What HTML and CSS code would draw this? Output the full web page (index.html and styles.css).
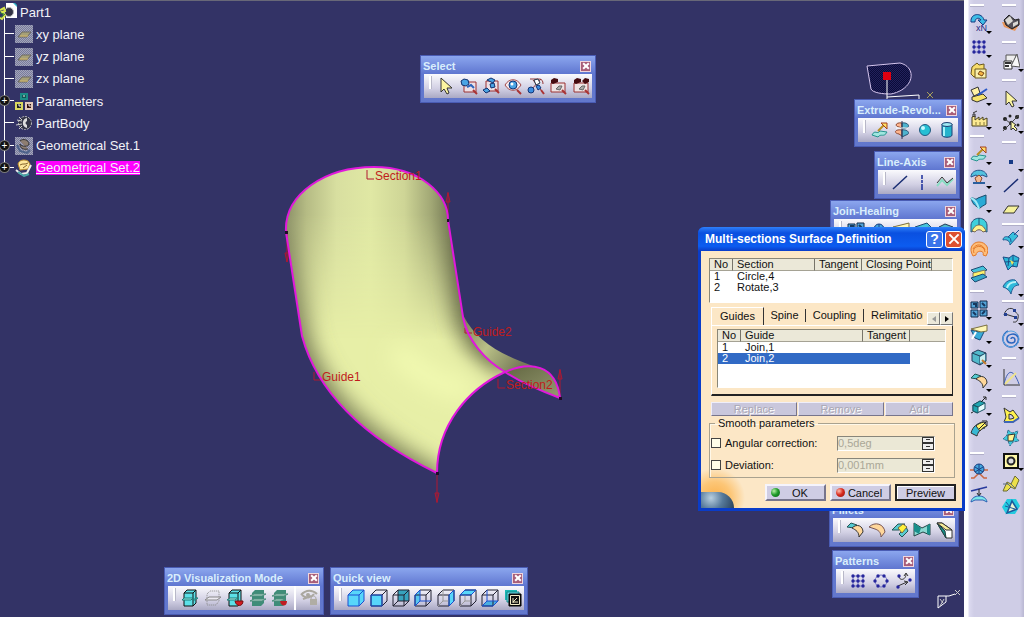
FILE: index.html
```html
<!DOCTYPE html>
<html lang="en">
<head>
    <meta charset="UTF-8">
    <meta name="viewport" content="width=device-width, initial-scale=1.0">
    <title>Part1</title>
    <link rel="stylesheet" href="styles.css">
</head>
<body>
    <!-- Icon shapes shared by the toolbars -->
    <svg class="sprites" aria-hidden="true">
        <defs>
            <pattern id="dither" width="2" height="2" patternUnits="userSpaceOnUse"><rect width="2" height="2" fill="#777b9e"/><path d="M0 0h1v1H0zM1 1h1v1H1z" fill="#a5a6b8"/></pattern>
            <pattern id="mesh" width="2" height="2" patternUnits="userSpaceOnUse"><path d="M0 0h1v1H0zM1 1h1v1H1z" fill="#0b0b38"/></pattern>
        </defs>
        <!-- tree -->
        <symbol id="t-part" viewBox="0 0 18 18"><path d="M6 0h8l3 3v12H6z" fill="#fff"/><path d="M13 0l4 4v-2l-2-2z" fill="#35b5c8"/><circle cx="9" cy="9" r="4.500" fill="#334" stroke="#bbb"/><path d="M0 7l4-2 1 3-3 1 3 3-3 4-2-1" fill="none" stroke="#d8e64c" stroke-width="2"/><path d="M0 10l4 1M1 14l4-3" stroke="#2c7a38"/></symbol>
        <symbol id="t-plane" viewBox="0 0 18 18"><rect width="18" height="18" fill="url(#dither)"/><path d="M3 12l4-5h9l-4 5z" fill="#a6a078" stroke="#6d6a63"/><path d="M5 11h8" stroke="#d3b66b"/></symbol>
        <symbol id="t-param" viewBox="0 0 18 18"><g stroke-width="2"><path d="M6 2h6v5H6z" fill="#155" stroke="#1c8c86"/><path d="M1 11h6v6H1z" fill="#222" stroke="#d9d860"/><path d="M11 11h6v6h-6z" fill="#311" stroke="#e3c9ba"/></g><path d="M3 13h2v2M13 13h2v2M8 4h2" fill="none" stroke="#eee"/></symbol>
        <symbol id="t-body" viewBox="0 0 18 18"><circle cx="10" cy="9" r="6.500" fill="#333446" stroke="#bbb" stroke-dasharray="2 1"/><path d="M12 4c-5 0-6 9 0 10v-3c-2-1-2-3 0-4z" fill="#ddd"/><path d="M2 6l5 1M1 11l6-1M4 3l3 3M4 15l3-3" stroke="#ccc"/></symbol>
        <symbol id="t-set" viewBox="0 0 18 18"><rect width="18" height="18" fill="url(#dither)"/><path d="M5 4c3-3 9-1 9 3 0 3-8 3-9 0 0 4 3 6 8 5" fill="#8d7d70" stroke="#333"/><path d="M2 8l3 6 7 2 3-3" fill="none" stroke="#4c618a" stroke-width="2"/></symbol>
        <symbol id="t-set2" viewBox="0 0 18 18"><path d="M3 5c1-4 6-5 10-3l2 3-2 5-8 1z" fill="#ffe79c" stroke="#b98c2e"/><path d="M5 6c3-2 5 0 8-2M8 9l4-3" fill="none" stroke="#82602a"/><path d="M1 11l5 4 6-1 4-8" fill="none" stroke="#eee" stroke-width="2"/><path d="M3 13l6 4 5-2" fill="none" stroke="#48a5a6" stroke-width="2"/></symbol>
        <!-- select -->
        <symbol id="i-arrow" viewBox="0 0 18 18"><path d="M4 1v14l3-3 3 5 2-1-2-5h5z" fill="#fcf5a0" stroke="#333"/></symbol>
        <symbol id="i-sel1" viewBox="0 0 18 18"><path d="M4 5h12v10H4z" fill="#ecdfe6" stroke="#9b3030"/><path d="M1 4l3-2 4 1 1 4-3 2-4-1z" fill="#4aa4e4" stroke="#13306e"/><path d="M7 10l4-2 3 3" stroke="#2c65bb" fill="none" stroke-width="2"/><path d="M13 13l4 4" stroke="#a33" stroke-width="2"/></symbol>
        <symbol id="i-sel2" viewBox="0 0 18 18"><path d="M4 4h12v10H4z" fill="#ecdfe6" stroke="#9b3030"/><path d="M5 3l4-2 4 2-2 3zM1 13l4-2 3 3-4 2zM8 7l4-1 1 4-4 1z" fill="#4aa4e4" stroke="#13306e"/><path d="M13 12l4 4" stroke="#a33" stroke-width="2"/></symbol>
        <symbol id="i-eye" viewBox="0 0 18 18"><path d="M1 8c4-7 12-7 16 0-4 7-12 7-16 0z" fill="#f4e9ed" stroke="#a34848"/><circle cx="9" cy="8" r="4" fill="#4aa4e4" stroke="#123477"/><circle cx="8" cy="7" r="1.500" fill="#fff"/><path d="M13 13l4 4" stroke="#a33" stroke-width="2"/></symbol>
        <symbol id="i-cut" viewBox="0 0 18 18"><path d="M3 2h9c3 0 4 2 4 5M6 3l8 10M14 2L4 13" stroke="#953838" fill="none"/><path d="M7 3l4-1 2 4-4 2z" fill="#fff" stroke="#234"/><circle cx="4" cy="13" r="3" fill="#3a8de0" stroke="#123477"/><path d="M9 9l3-1 2 3-3 2z" fill="#3a8de0" stroke="#123477"/><path d="M14 13l3 4" stroke="#a33" stroke-width="2"/></symbol>
        <symbol id="i-box1" viewBox="0 0 18 18"><path d="M2 6h14v9H2z" fill="#eee3e4" stroke="#9b3030"/><path d="M2 3l3-2 4 1v3l-5 2-2-1z" fill="#450b10"/><path d="M7 12l3-3h3l-2 4z" fill="#aaa" stroke="#666"/><path d="M13 13l4 4" stroke="#a33" stroke-width="2"/></symbol>
        <symbol id="i-box2" viewBox="0 0 18 18"><path d="M2 6h14v9H2z" fill="#eee3e4" stroke="#9b3030"/><path d="M2 3l3-2 4 1v3l-5 2-2-1zM10 4l3-3 4 1v3l-4 2z" fill="#450b10"/><path d="M7 12l3-3h3l-2 4z" fill="#aaa" stroke="#666"/><path d="M13 13l4 4" stroke="#a33" stroke-width="2"/></symbol>
        <!-- surfaces -->
        <symbol id="i-extrude" viewBox="0 0 18 18"><path d="M1 14c3-6 5 0 8-4l7 1c-3 6-6 1-9 5z" fill="#9fe6df" stroke="#26938f"/><path d="M7 10l6-6" stroke="#b98e20" stroke-width="2"/><path d="M10 2h6v6z" fill="#ffdf66" stroke="#a33e1c"/></symbol>
        <symbol id="i-revolve" viewBox="0 0 18 18"><path d="M9 2c-6-1-8 3-3 4l3 1zM9 9c-7-1-9 3-3 4l3 2z" fill="#ffb58e" stroke="#8a4730"/><path d="M9 2c6-1 9 4 4 5l-4 1zM9 9c6-1 9 4 4 5l-4 2z" fill="#4eb3ce" stroke="#265374"/><path d="M9 0v18" stroke="#335"/><path d="M3 7h12" stroke="#fff"/></symbol>
        <symbol id="i-sphere" viewBox="0 0 18 18"><circle cx="9" cy="9" r="5.500" fill="#26bfd4" stroke="#225a80"/><circle cx="7" cy="7" r="2" fill="#c5fbff"/></symbol>
        <symbol id="i-cyl" viewBox="0 0 18 18"><path d="M4 3v11c0 3 10 3 10 0V3z" fill="#24b3cc" stroke="#1c3f74"/><path d="M6 6v9" stroke="#a6f3fa" stroke-width="2"/><ellipse cx="9" cy="3.500" rx="5" ry="2" fill="#9fe9f2" stroke="#1c3f74"/></symbol>
        <symbol id="i-line" viewBox="0 0 18 18"><path d="M2 16L16 3" stroke="#182c72" stroke-width="1.500"/></symbol>
        <symbol id="i-axis" viewBox="0 0 18 18"><path d="M9 2v4m0 1v3m0 1v6" stroke="#182c9a" stroke-width="1.500"/></symbol>
        <symbol id="i-poly" viewBox="0 0 18 18"><path d="M1 13l5-6 5 5 6-6" fill="none" stroke="#8adcc4" stroke-width="2"/><path d="M1 10l5-6 5 6 6-5" fill="none" stroke="#333"/></symbol>
        <!-- fillets -->
        <symbol id="i-fil1" viewBox="0 0 18 18"><path d="M1 6l4-4 6 2-3 3z" fill="#54cbd2" stroke="#255"/><path d="M6 7c5-5 11-2 11 4l-4 5c0-5-3-7-7-9z" fill="#ffd79a" stroke="#333"/></symbol>
        <symbol id="i-fil2" viewBox="0 0 18 18"><path d="M1 6c6-6 15-3 16 5l-4 5c0-5-3-7-6-8-2-1-4-1-6-2z" fill="#ffd79a" stroke="#755"/></symbol>
        <symbol id="i-fil3" viewBox="0 0 18 18"><path d="M1 9l6-6h7l-6 6zM8 13l7-7 2 4-6 6z" fill="#58cbd0" stroke="#255"/><path d="M7 7l5-4 4 3-5 6z" fill="#fff23c" stroke="#764"/></symbol>
        <symbol id="i-fil4" viewBox="0 0 18 18"><path d="M1 2l8 5 8-4v11l-7-3-9 4z" fill="#8bd9d2" stroke="#244"/><path d="M1 2v8l5 3 2-6zM17 3l-3 2v8l3 1z" fill="#198f8b"/></symbol>
        <symbol id="i-fil5" viewBox="0 0 18 18"><path d="M2 2h5l10 7v8h-6z" fill="#fff" stroke="#333"/><path d="M2 2l9 15-1-7z" fill="#178f88" stroke="#244"/><path d="M2 2h5l10 7h-6z" fill="#f6ec98" stroke="#333"/></symbol>
        <!-- patterns -->
        <symbol id="i-grid" viewBox="0 0 18 18"><path d="M3 4h12M3 9h12M3 14h12M4 3v12M9 3v12M14 3v12" stroke="#7a7ac8"/><g fill="#26269c"><circle cx="4" cy="4" r="1.700"/><circle cx="9" cy="4" r="1.700"/><circle cx="14" cy="4" r="1.700"/><circle cx="4" cy="9" r="1.700"/><circle cx="9" cy="9" r="1.700"/><circle cx="14" cy="9" r="1.700"/><circle cx="4" cy="14" r="1.700"/><circle cx="9" cy="14" r="1.700"/><circle cx="14" cy="14" r="1.700"/></g></symbol>
        <symbol id="i-ring" viewBox="0 0 18 18"><circle cx="9" cy="9" r="6" fill="none" stroke="#7a7ac8"/><g fill="#26269c"><circle cx="6" cy="4" r="1.700"/><circle cx="12" cy="4" r="1.700"/><circle cx="3" cy="9" r="1.700"/><circle cx="15" cy="9" r="1.700"/><circle cx="6" cy="14" r="1.700"/><circle cx="12" cy="14" r="1.700"/></g></symbol>
        <symbol id="i-upat" viewBox="0 0 18 18"><path d="M4 5c1 4 7 3 7-3M9 4l2-3 2 3M3 14l9-4M9 9l4 1-3 3" fill="none" stroke="#333"/><g fill="#26269c"><circle cx="4" cy="4" r="1.700"/><circle cx="3" cy="15" r="1.700"/><circle cx="15" cy="8" r="1.700"/></g></symbol>
        <!-- visualization -->
        <symbol id="i-v1" viewBox="0 0 18 18"><path d="M3 4l3-3h9v13l-3 3H3z" fill="#5ce0e8" stroke="#111"/><path d="M3 4h9v13M12 4l3-3" fill="none" stroke="#111"/><path d="M1 11l2-2h9l-2 2zM12 11l3-2h2l-3 2z" fill="#98ecea" stroke="#187e78"/></symbol>
        <symbol id="i-v2" viewBox="0 0 18 18"><path d="M3 5l3-3h9v10l-3 4H3z" fill="none" stroke="#888" stroke-dasharray="1 1"/><path d="M1 11l4-3h12l-4 3z" fill="#eceaf2" stroke="#888"/></symbol>
        <symbol id="i-v3" viewBox="0 0 18 18"><path d="M3 4l3-3h9v13l-3 3H3z" fill="#5ce0e8" stroke="#111"/><path d="M3 4h9v9M12 4l3-3" fill="none" stroke="#111"/><path d="M1 11l3-2h8l-3 2z" fill="#c0f4f2" stroke="#187e78"/><path d="M9 12h8c0 6-7 6-8 0z" fill="#d01c22" stroke="#711"/></symbol>
        <symbol id="i-v4" viewBox="0 0 18 18"><path d="M3 4l3-3h9v13l-3 3H3z" fill="#3f8c78"/><path d="M1 7l4-2h12l-4 2zM1 12l4-2h12l-4 2z" fill="#b4d6cc" stroke="#4c8c7b"/></symbol>
        <symbol id="i-v5" viewBox="0 0 18 18"><path d="M3 4l3-3h9v13l-3 3H3z" fill="#3f8c78"/><path d="M1 7l4-2h12l-4 2zM1 12l4-2h9l-4 2z" fill="#b4d6cc" stroke="#4c8c7b"/><path d="M9 12h7c0 6-6 6-7 0z" fill="#c01c22"/></symbol>
        <symbol id="i-v6" viewBox="0 0 18 18"><path d="M1 6c5-6 12-5 16-1M2 6c4 4 9 3 12-1M3 10l8-3" fill="none" stroke="#aaa79f" stroke-width="2"/><circle cx="8" cy="6" r="2" fill="#aaa79f"/><path d="M10 10h7v6h-7z" fill="#b0ada4"/><path d="M11 10c0-4 5-4 5 0" fill="none" stroke="#aaa79f"/></symbol>
        <!-- cube views -->
        <symbol id="cube" viewBox="0 0 18 18"><path d="M1 6h11v11H1zM6 1h11v11l-5 5M1 6l5-5M12 6l5-5" fill="none" stroke="#223"/></symbol>
        <symbol id="i-q1" viewBox="0 0 18 18"><path d="M1 6l5-5h11v11l-5 5H1z" fill="#58d6fa" stroke="#1a4ed0"/><path d="M1 6h11v11M12 6l5-5" fill="none" stroke="#1a4ed0"/></symbol>
        <symbol id="i-q2" viewBox="0 0 18 18"><path d="M1 6h11v11H1z" fill="#58d6fa"/><use href="#cube"/><path d="M1 6h11v11H1z" fill="none" stroke="#1a4ed0"/></symbol>
        <symbol id="i-q3" viewBox="0 0 18 18"><path d="M6 1h11v11H6z" fill="#37a4bd"/><use href="#cube"/><path d="M6 1v11h11M1 17l5-5" fill="none" stroke="#223"/></symbol>
        <symbol id="i-q4" viewBox="0 0 18 18"><path d="M1 6l5-5v11l-5 5z" fill="#58c6ee"/><use href="#cube"/><path d="M6 12h11M1 6l5-5v11l-5 5z" fill="none" stroke="#1a4ed0"/></symbol>
        <symbol id="i-q5" viewBox="0 0 18 18"><path d="M12 6l5-5v11l-5 5z" fill="#58d6fa"/><use href="#cube"/><path d="M6 1v11h6M1 17l5-5" fill="none" stroke="#999"/><path d="M12 6l5-5v11l-5 5z" fill="none" stroke="#1a4ed0"/></symbol>
        <symbol id="i-q6" viewBox="0 0 18 18"><path d="M1 6l5-5h11l-5 5z" fill="#58d6fa"/><use href="#cube"/><path d="M6 6v6h6M1 17l5-5" fill="none" stroke="#999"/><path d="M1 6l5-5h11l-5 5z" fill="none" stroke="#1a4ed0"/></symbol>
        <symbol id="i-q7" viewBox="0 0 18 18"><path d="M1 17l5-5h11l-5 5z" fill="#49aee0"/><use href="#cube"/><path d="M6 1v11M1 17l5-5h11l-5 5z" fill="none" stroke="#1a4ed0"/></symbol>
        <symbol id="i-q8" viewBox="0 0 18 18"><path d="M1 1h12v10H1z" fill="#1bb6b4"/><path d="M3 3h12v10H3z" fill="#7de" stroke="#188"/><path d="M5 5h12v12H5z" fill="#111" stroke="#000"/><path d="M6.500 6.500h9v9h-9zM9 14v-5M9 13h5M9 13l4-4" fill="none" stroke="#f3edc9"/></symbol>
        <!-- dock -->
        <symbol id="d-update" viewBox="0 0 18 18"><path d="M1 8c-1-9 11-10 13-2h3l-4 5-5-5h3c-2-3-6-2-6 2z" fill="#3ebde6" stroke="#173a80"/></symbol>
        <symbol id="d-catalog" viewBox="0 0 18 18"><path d="M2 5l5-4 2 2 5-1v9l-10 4-3-3z" fill="#f7dc6c" stroke="#6b581f"/><path d="M5 7h11v9H5z" fill="#f9efab" stroke="#6b581f"/><path d="M8 12l2-3 4 2-2 3z" fill="#f7b442" stroke="#7a4a15"/></symbol>
        <symbol id="d-sketch" viewBox="0 0 18 18"><path d="M1 4l7-3 2 6-6 3z" fill="#fff2a4" stroke="#333"/><path d="M2 11l11-3 4 4-10 4-5-2z" fill="#f7e46c" stroke="#333"/><path d="M8 9l9-6" stroke="#2a58c8" stroke-width="2"/></symbol>
        <symbol id="d-factory" viewBox="0 0 18 18"><path d="M2 16V7l3-1v4l4-3v3l4-3v3l4-2v8z" fill="#fbe991" stroke="#4b431c"/><path d="M3 7V4h2v3M3 3l4-2" fill="none" stroke="#333"/><path d="M6 12v3M10 12v3M14 12v3" stroke="#86793c"/></symbol>
        <symbol id="d-umbrella" viewBox="0 0 18 18"><path d="M1 8c0-9 16-9 16 0l-5-2-3 2-3-2z" fill="#52c1de" stroke="#24548a"/><path d="M5 9l4-3 3 3-2 5H7z" fill="#f3bb91" stroke="#8a482b"/><path d="M3 14h12" stroke="#2a5f9e" stroke-width="2"/></symbol>
        <symbol id="d-sheet" viewBox="0 0 18 18"><path d="M1 5c3-1 4 3 7 0l8-3v9c-3 2-4 2-7 5-3-4-6-3-8-11z" fill="#29aad6" stroke="#1b4b6b"/><path d="M1 5c4 2 6 4 8 11" fill="none" stroke="#9fe9f5" stroke-width="2"/></symbol>
        <symbol id="d-dome" viewBox="0 0 18 18"><path d="M1 15V8c1-9 15-9 16 0v7l-3-1c-2-3-8-3-10 0z" fill="#3fd0dc" stroke="#24547a"/><path d="M2 14c2-5 5-6 7-6s5 1 7 6l-3 1c-2-3-6-3-8 0z" fill="#fff28c" stroke="#765"/><path d="M9 1v7" stroke="#24547a"/></symbol>
        <symbol id="d-shell" viewBox="0 0 18 18"><path d="M3 15c-5-8 0-14 6-14s12 6 7 14l-3-1c2-5-7-5-7 0z" fill="#ffbd78" stroke="#e27a2b"/><path d="M4 12c-3-7 10-10 11-1M3 8c3-6 10-5 12 1" fill="none" stroke="#e27a2b"/></symbol>
        <symbol id="d-blend" viewBox="0 0 18 18"><path d="M1 5l12-4 4 4-12 4z" fill="#44c3db" stroke="#1d4b73"/><path d="M3 8l12-3v5l-12 3z" fill="#fff26a" stroke="#776"/><path d="M1 13l12-4 4 3-12 5z" fill="#36a9ca" stroke="#1d4b73"/></symbol>
        <symbol id="d-join" viewBox="0 0 18 18"><g fill="#53a4d8" stroke="#112a4a"><path d="M1 2h7v6H1zM10 1h7v7h-7zM1 10h7v7H1zM10 10h7v6h-7z"/></g><path d="M3 4h3v3M12 3l3 3M3 12l3 3M12 14l3-3" stroke="#17395f" fill="none" stroke-width="2"/></symbol>
        <symbol id="d-trim" viewBox="0 0 18 18"><path d="M1 6l8 2 7-4-6 12-5-2z" fill="#39abd8" stroke="#1b4b7b"/><path d="M1 5l16-4v6l-6 1z" fill="#fff7b5" stroke="#7b7040"/><path d="M2 15l4-7" stroke="#fff" stroke-width="2"/></symbol>
        <symbol id="d-cube" viewBox="0 0 18 18"><path d="M2 5l6-3 8 3v8l-6 4-8-4z" fill="#52b9cb" stroke="#223c5a"/><path d="M2 5l8 3 6-3M10 8v9" fill="none" stroke="#223c5a"/><path d="M10 9l5-3v6l-5 3z" fill="#c9edf0"/><path d="M12 12l4 4" stroke="#c07a2c" stroke-width="2"/></symbol>
        <symbol id="d-move" viewBox="0 0 18 18"><path d="M3 9l7-4 5 2v6l-8 4-4-2z" fill="#e4fbfc" stroke="#1d5566"/><path d="M3 9l5 2v6l-5-2zM3 9l7-4 5 2-7 4z" fill="#1fa6b1" stroke="#1d5566"/><path d="M11 6l5-5M13 1h3v3M3 16l-2 1" fill="none" stroke="#222"/></symbol>
        <symbol id="d-extrap" viewBox="0 0 18 18"><path d="M1 13c2-7 6-9 11-11l3 6c-5 1-7 4-8 8z" fill="#38b9d5" stroke="#333"/><path d="M6 6c2-2 4-3 8-4l3 4c-3 1-5 2-7 5z" fill="#fff168" stroke="#333"/><path d="M9 9l7-7M12 1h5v5" fill="none" stroke="#222"/></symbol>
        <symbol id="d-knot" viewBox="0 0 18 18"><path d="M0 8h4l4 4-4 4H1M18 8h-4l-4 4 4 4h3" fill="none" stroke="#cb6841" stroke-width="1.500"/><circle cx="9" cy="7" r="5" fill="#45a6dd" stroke="#1b3f83"/><path d="M9 2v10M5 5l8 5M13 5l-8 5" stroke="#1b3f83"/></symbol>
        <symbol id="d-drop" viewBox="0 0 18 18"><path d="M1 5l16-4" stroke="#27399d" stroke-width="1.500"/><path d="M9 3v7M7 7l2 3 2-3" fill="none" stroke="#222"/><path d="M1 16c1-8 15-8 16 0l-4-2H5z" fill="#7be7ea" stroke="#2b5db2"/></symbol>
        <symbol id="d-book" viewBox="0 0 18 18"><path d="M0 8l18 1-5 8-11-4z" fill="#e8975c"/><path d="M2 6l5-5 6 5 4-1v6l-7 4-6-4z" fill="#55525a" stroke="#222"/><path d="M3 6l5-4 3 5-5 4zM11 9l5-2v3l-5 3z" fill="#dad9d4"/></symbol>
        <symbol id="d-draft" viewBox="0 0 18 18"><path d="M4 3h10v9H4z" fill="#eee" stroke="#555"/><path d="M2 9h8v8H2z" fill="#fff" stroke="#333"/><path d="M3 11h6M3 14h4" stroke="#333" stroke-width="2"/><path d="M9 14l6-12 3 13z" fill="#f8f8f8" stroke="#555"/></symbol>
        <symbol id="d-pick" viewBox="0 0 18 18"><g fill="#222"><circle cx="3" cy="5" r="2"/><circle cx="8" cy="2" r="1.500"/><circle cx="15" cy="3" r="2"/><circle cx="3" cy="14" r="2"/><circle cx="16" cy="11" r="1.500"/><circle cx="9" cy="9" r="2"/></g><path d="M1 17L17 1M3 5l11 9" stroke="#444"/><path d="M9 7v9l2-2 3 3 1-2-3-3 2-1z" fill="#fbf7a8" stroke="#333"/></symbol>
        <symbol id="d-point" viewBox="0 0 18 18"><path d="M7 8h4v4H7z" fill="#163b86"/></symbol>
        <symbol id="d-plane" viewBox="0 0 18 18"><path d="M1 13l5-7h11l-5 7z" fill="#f5f19b" stroke="#333"/></symbol>
        <symbol id="d-sweep" viewBox="0 0 18 18"><path d="M1 11c0-3 3-4 5-3l5-5 5 4-8 9c0-4-3-6-7-5z" fill="#38c0dd" stroke="#245b93"/><path d="M6 8c2 0 3 2 3 5M12 6l5-5" fill="none" stroke="#214d92"/></symbol>
        <symbol id="d-net" viewBox="0 0 18 18"><path d="M1 4l6 1 4-3 6 3-2 9-5-1-4 4-2-5z" fill="#2cb8d8" stroke="#1c4c85"/><path d="M7 5l-1 8M11 2v12M3 9l13-1" stroke="#1c4c85" fill="none"/><path d="M8 7l4 2-2 3z" fill="#eee45c"/></symbol>
        <symbol id="d-loft" viewBox="0 0 18 18"><path d="M1 10c2-6 8-8 12-7l4 5c-5 0-7 4-8 9-1-3-4-6-8-7z" fill="#2fbadb" stroke="#245b93"/><path d="M5 11c1-4 4-6 9-6" fill="none" stroke="#b8f2f8" stroke-width="2"/></symbol>
        <symbol id="d-arc" viewBox="0 0 18 18"><path d="M2 9C4 1 11 1 13 5s4 2 3 7-3 4-5 4M3 8l10 3" fill="none" stroke="#333"/><path d="M2 7h3v3H2zM11 3h3v3h-3zM12 10h3v3h-3z" fill="#223e91"/></symbol>
        <symbol id="d-spiral" viewBox="0 0 18 18"><path d="M9 9c0-2 4-2 4 1 0 4-7 4-8 0-1-6 8-8 11-3 2 7-5 12-11 9-6-4-5-12 1-15" fill="none" stroke="#2865bf" stroke-width="1.500"/><circle cx="9" cy="9" r="8" fill="none" stroke="#58a1df"/></symbol>
        <symbol id="d-law" viewBox="0 0 18 18"><path d="M2 1v16h16" fill="none" stroke="#333"/><path d="M2 16C6-1 12 2 17 16" fill="none" stroke="#3e5fb4"/><path d="M3 16l11-11" stroke="#eee28d" stroke-width="2"/></symbol>
        <symbol id="d-bound" viewBox="0 0 18 18"><path d="M2 2l6 4 3-2 6 8-6 4H2l2-5z" fill="#fff24e" stroke="#333"/><path d="M7 8l3 1 2 3-3 1H7z" fill="#cfcde6" stroke="#333"/><path d="M2 16h9l6-4" fill="none" stroke="#4066b4" stroke-width="2"/></symbol>
        <symbol id="d-cross" viewBox="0 0 18 18"><path d="M6 1l4 3 6-2-2 6 3 4-6 1-3 4-2-5-5-2 4-4z" fill="#3dcbdc" stroke="#397195" stroke-dasharray="3 1"/><path d="M6 6l7-1-2 7H6z" fill="#fff393" stroke="#333"/></symbol>
        <symbol id="d-hole" viewBox="0 0 18 18"><path d="M2 2h14v14H2z" fill="#fff8a8" stroke="#111" stroke-width="2"/><circle cx="9" cy="9" r="3.500" fill="#ddd" stroke="#222" stroke-width="2"/></symbol>
        <symbol id="d-fold" viewBox="0 0 18 18"><path d="M1 16l4-9 4 2 4-8 4 4-4 9-4-2-4 4z" fill="#ece04a" stroke="#6b6b34"/><path d="M5 8l4 4M9 9l4 4M1 9h5" stroke="#5d6c80"/></symbol>
        <symbol id="d-tri" viewBox="0 0 18 18"><path d="M5 1h9l4 7-5 8H4L0 9z" fill="#25cbe0"/><path d="M10 3l5 8-10 4z" fill="#eaf5d4" stroke="#1e599b" stroke-width="1.500"/><path d="M4 4l4 5M3 8l10 3" stroke="#1e599b"/></symbol>
    </svg>

    <div class="app">
        <main class="viewport">
            <ul class="tree">
                <li class="root"><svg><use href="#t-part"/></svg><span>Part1</span></li>
                <li><svg><use href="#t-plane"/></svg><span>xy plane</span></li>
                <li><svg><use href="#t-plane"/></svg><span>yz plane</span></li>
                <li><svg><use href="#t-plane"/></svg><span>zx plane</span></li>
                <li class="expandable"><svg><use href="#t-param"/></svg><span>Parameters</span></li>
                <li><svg><use href="#t-body"/></svg><span>PartBody</span></li>
                <li class="expandable"><svg><use href="#t-set"/></svg><span>Geometrical Set.1</span></li>
                <li class="expandable active"><svg><use href="#t-set2"/></svg><span>Geometrical Set.2</span></li>
            </ul>

            <!-- The lofted surface -->
            <svg class="model" viewBox="270 150 310 360">
                <defs>
                    <linearGradient id="skin" gradientUnits="userSpaceOnUse" x1="286" y1="0" x2="455" y2="0">
                        <stop offset="0" stop-color="#8b9067"/>
                        <stop offset=".12" stop-color="#b5bb84"/>
                        <stop offset=".3" stop-color="#d8dfa0"/>
                        <stop offset=".5" stop-color="#e0e8a4"/>
                        <stop offset=".7" stop-color="#ced596"/>
                        <stop offset=".86" stop-color="#a1a775"/>
                        <stop offset="1" stop-color="#686c4b"/>
                    </linearGradient>
                    <linearGradient id="fade" gradientUnits="userSpaceOnUse" x1="0" y1="215" x2="0" y2="340">
                        <stop offset="0" stop-color="#fff"/>
                        <stop offset="1" stop-color="#000"/>
                    </linearGradient>
                    <mask id="upper"><rect x="270" y="150" width="310" height="360" fill="url(#fade)"/></mask>
                    <filter id="soft" x="-50%" y="-50%" width="200%" height="200%"><feGaussianBlur stdDeviation="11"/></filter>
                    <clipPath id="body"><path d="M286 232C284 194 325 167 374 167C420 167 448 194 448 220L463 317C467 340 485 360 505 372C468 389 437 425 437 473C375 443 319 399 302 336Z"/></clipPath>
                    <linearGradient id="tail" x1="0" y1="0" x2="1" y2=".6"><stop offset="0" stop-color="#777b55"/><stop offset=".5" stop-color="#b9c087"/><stop offset="1" stop-color="#777b58"/></linearGradient>
                    <linearGradient id="under" x1="0" y1="0" x2="1" y2="1"><stop offset="0" stop-color="#626641"/><stop offset="1" stop-color="#959a70"/></linearGradient>
                </defs>
                <path d="M463 315C477 342 500 354 533 366C522 366 514 368 505 372C485 360 467 340 463 317Z" fill="url(#tail)"/>
                <path d="M505 372C530 361 556 364 560 398C541 391 520 382 505 372Z" fill="url(#under)"/>
                <g clip-path="url(#body)">
                    <rect x="270" y="150" width="310" height="360" fill="#e7efa7"/>
                    <g filter="url(#soft)" fill="none">
                        <path d="M280 220L294 336C311 405 370 450 440 486" stroke="#747952" stroke-width="30"/>
                        <path d="M456 190L472 317C478 340 492 352 512 360" stroke="#5d613f" stroke-width="32"/>
                        <path d="M395 350C430 385 455 390 470 388" stroke="#f3fbb2" stroke-width="20"/>
                    </g>
                    <rect x="270" y="150" width="310" height="360" fill="url(#skin)" mask="url(#upper)"/>
                </g>
                <g fill="none" stroke="#b01830">
                    <path d="M287 233v29M285 253h4l-2 9zM448 220v-28M446 202h4l-2-9zM437 473v30M435 493h4l-2 9zM560 398v-29M558 379h4l-2-9z"/>
                    <path d="M367 170v9h7M465 328v5h7M314 372v8h7M498 379v9h7"/>
                </g>
                <g fill="none" stroke="#e018dc" stroke-width="2">
                    <path d="M286 232C284 194 325 167 374 167C420 167 448 194 448 220L463 317C467 340 485 360 505 372C520 382 541 391 560 398"/>
                    <path d="M286 232L302 336C319 399 375 443 437 473C437 425 468 389 505 372C530 361 556 364 560 398"/>
                </g>
                <path d="M285 231h3v3h-3zM447 219h2v3h-2zM436 472h3v3h-3zM559 397h3v3h-3z" fill="#200c28"/>
                <g class="model-labels">
                    <text x="375" y="180">Section1</text>
                    <text x="473" y="336">Guide2</text>
                    <text x="322" y="381">Guide1</text>
                    <text x="506" y="389">Section2</text>
                </g>
            </svg>

            <svg class="compass" viewBox="0 0 80 45">
                <path d="M7 7L40 4C57 8 55 30 31 35C23 35 13 34 11 30Z" fill="#22225c"/>
                <path d="M7 7L40 4C57 8 55 30 31 35C23 35 13 34 11 30Z" fill="url(#mesh)" stroke="#d6c6ee"/>
                <path d="M27 17v28M27 38l32-2v8" fill="none" stroke="#fff"/>
                <path d="M23 13h8v8h-8z" fill="#e00010"/>
                <path d="M67 33l6 6M73 33l-6 6" stroke="#a9a05a"/>
            </svg>

            <svg class="axes" viewBox="0 0 28 24">
                <path d="M3 20V8h11l6-2M3 20l8-6V8" fill="none" stroke="#fff"/>
                <path d="M20 2l5 5M25 2l-5 5" stroke="#ccc"/>
                <path d="M5 11l3 4M9 11l-4 7" stroke="#ccc"/>
            </svg>

            <section class="toolbar select">
                <header><h2>Select</h2><button class="close" aria-label="Close"></button></header>
                <div class="tools">
                    <button><svg><use href="#i-arrow"/></svg></button>
                    <button><svg><use href="#i-sel1"/></svg></button>
                    <button><svg><use href="#i-sel2"/></svg></button>
                    <button><svg><use href="#i-eye"/></svg></button>
                    <button><svg><use href="#i-cut"/></svg></button>
                    <button><svg><use href="#i-box1"/></svg></button>
                    <button><svg><use href="#i-box2"/></svg></button>
                </div>
            </section>

            <section class="toolbar extrude">
                <header><h2>Extrude-Revol...</h2><button class="close" aria-label="Close"></button></header>
                <div class="tools">
                    <button><svg><use href="#i-extrude"/></svg></button>
                    <button><svg><use href="#i-revolve"/></svg></button>
                    <button><svg><use href="#i-sphere"/></svg></button>
                    <button><svg><use href="#i-cyl"/></svg></button>
                </div>
            </section>

            <section class="toolbar line-axis">
                <header><h2>Line-Axis</h2><button class="close" aria-label="Close"></button></header>
                <div class="tools">
                    <button><svg><use href="#i-line"/></svg></button>
                    <button><svg><use href="#i-axis"/></svg></button>
                    <button><svg><use href="#i-poly"/></svg></button>
                </div>
            </section>

            <section class="toolbar healing">
                <header><h2>Join-Healing</h2><button class="close" aria-label="Close"></button></header>
                <div class="tools">
                    <button><svg><use href="#d-join"/></svg></button>
                    <button><svg><use href="#d-knot"/></svg></button>
                    <button><svg><use href="#d-trim"/></svg></button>
                    <button><svg><use href="#d-blend"/></svg></button>
                    <button><svg><use href="#d-cube"/></svg></button>
                </div>
            </section>

            <section class="toolbar fillets">
                <header><h2>Fillets</h2><button class="close" aria-label="Close"></button></header>
                <div class="tools">
                    <button><svg><use href="#i-fil1"/></svg></button>
                    <button><svg><use href="#i-fil2"/></svg></button>
                    <button><svg><use href="#i-fil3"/></svg></button>
                    <button><svg><use href="#i-fil4"/></svg></button>
                    <button><svg><use href="#i-fil5"/></svg></button>
                </div>
            </section>

            <section class="toolbar patterns">
                <header><h2>Patterns</h2><button class="close" aria-label="Close"></button></header>
                <div class="tools">
                    <button><svg><use href="#i-grid"/></svg></button>
                    <button><svg><use href="#i-ring"/></svg></button>
                    <button><svg><use href="#i-upat"/></svg></button>
                </div>
            </section>

            <section class="toolbar visual">
                <header><h2>2D Visualization Mode</h2><button class="close" aria-label="Close"></button></header>
                <div class="tools">
                    <button><svg><use href="#i-v1"/></svg></button>
                    <button><svg><use href="#i-v2"/></svg></button>
                    <button><svg><use href="#i-v3"/></svg></button>
                    <button><svg><use href="#i-v4"/></svg></button>
                    <button><svg><use href="#i-v5"/></svg></button>
                    <i class="divider"></i>
                    <button><svg><use href="#i-v6"/></svg></button>
                </div>
            </section>

            <section class="toolbar quick">
                <header><h2>Quick view</h2><button class="close" aria-label="Close"></button></header>
                <div class="tools">
                    <button><svg><use href="#i-q1"/></svg></button>
                    <button><svg><use href="#i-q2"/></svg></button>
                    <button><svg><use href="#i-q3"/></svg></button>
                    <button><svg><use href="#i-q4"/></svg></button>
                    <button><svg><use href="#i-q5"/></svg></button>
                    <button><svg><use href="#i-q6"/></svg></button>
                    <button><svg><use href="#i-q7"/></svg></button>
                    <button><svg><use href="#i-q8"/></svg></button>
                </div>
            </section>

            <!-- Dialog -->
            <form class="dialog">
                <header class="dialog-title">
                    <h1>Multi-sections Surface Definition</h1>
                    <button type="button" class="help">?</button>
                    <button type="button" class="quit" aria-label="Close"></button>
                </header>
                <div class="dialog-body">
                    <div class="list sections">
                        <table>
                            <colgroup><col class="c-no"><col class="c-section"><col class="c-tangent"><col class="c-closing"><col></colgroup>
                            <thead><tr><th>No</th><th>Section</th><th>Tangent</th><th>Closing Point</th><th></th></tr></thead>
                            <tbody>
                                <tr><td>1</td><td>Circle,4</td><td></td><td></td><td></td></tr>
                                <tr><td>2</td><td>Rotate,3</td><td></td><td></td><td></td></tr>
                            </tbody>
                        </table>
                    </div>

                    <div class="tabs">
                        <button type="button" class="tab current">Guides</button>
                        <button type="button" class="tab">Spine</button>
                        <button type="button" class="tab">Coupling</button>
                        <button type="button" class="tab last">Relimitation</button>
                        <button type="button" class="scroll off" aria-label="Previous tabs"></button>
                        <button type="button" class="scroll" aria-label="Next tabs"></button>
                    </div>
                    <div class="panel">
                        <div class="list guides">
                            <table>
                                <colgroup><col class="c-no"><col class="c-guide"><col class="c-tangent"><col></colgroup>
                                <thead><tr><th>No</th><th>Guide</th><th>Tangent</th><th></th></tr></thead>
                                <tbody>
                                    <tr><td>1</td><td>Join,1</td><td></td><td></td></tr>
                                    <tr class="picked"><td>2</td><td>Join,2</td><td></td><td></td></tr>
                                </tbody>
                            </table>
                        </div>
                    </div>

                    <div class="edit-row">
                        <button type="button" disabled>Replace</button>
                        <button type="button" disabled>Remove</button>
                        <button type="button" disabled>Add</button>
                    </div>

                    <fieldset>
                        <legend>Smooth parameters</legend>
                        <div class="param">
                            <input type="checkbox" id="angular">
                            <label for="angular">Angular correction:</label>
                            <span class="spin">
                                <input type="text" value="0,5deg" aria-label="Angle" disabled>
                                <span class="steps"><button type="button" aria-label="Up"></button><button type="button" aria-label="Down"></button></span>
                            </span>
                        </div>
                        <div class="param">
                            <input type="checkbox" id="deviation">
                            <label for="deviation">Deviation:</label>
                            <span class="spin">
                                <input type="text" value="0,001mm" aria-label="Distance" disabled>
                                <span class="steps"><button type="button" aria-label="Up"></button><button type="button" aria-label="Down"></button></span>
                            </span>
                        </div>
                    </fieldset>

                    <div class="actions">
                        <button type="button"><i class="lamp green"></i><span>OK</span></button>
                        <button type="button"><i class="lamp red"></i><span>Cancel</span></button>
                        <button type="button" class="default"><span>Preview</span></button>
                    </div>
                </div>
            </form>
        </main>

        <aside class="dock">
            <div class="dock-col">
                <i class="sep"></i>
                <button class="more"><svg><use href="#d-update"/><text x="6" y="17">xN</text></svg></button>
                <button class="more"><svg><use href="#i-grid"/></svg></button>
                <button><svg><use href="#d-catalog"/></svg></button>
                <button class="more"><svg><use href="#d-sketch"/></svg></button>
                <button class="more"><svg><use href="#d-factory"/></svg></button>
                <i class="sep"></i>
                <button class="more"><svg><use href="#i-extrude"/></svg></button>
                <button class="more"><svg><use href="#d-umbrella"/></svg></button>
                <button class="more"><svg><use href="#d-sheet"/></svg></button>
                <button><svg><use href="#d-dome"/></svg></button>
                <button><svg><use href="#d-shell"/></svg></button>
                <button><svg><use href="#d-blend"/></svg></button>
                <i class="sep"></i>
                <button class="more"><svg><use href="#d-join"/></svg></button>
                <button class="more"><svg><use href="#d-trim"/></svg></button>
                <button class="more"><svg><use href="#d-cube"/></svg></button>
                <button class="more"><svg><use href="#i-fil1"/></svg></button>
                <button class="more"><svg><use href="#d-move"/></svg></button>
                <button><svg><use href="#d-extrap"/></svg></button>
                <i class="sep spaced"></i>
                <button><svg><use href="#d-knot"/></svg></button>
                <button><svg><use href="#d-drop"/></svg></button>
            </div>
            <div class="dock-col second">
                <i class="sep"></i>
                <button><svg><use href="#d-book"/></svg></button>
                <i class="sep"></i>
                <button class="more"><svg><use href="#d-draft"/></svg></button>
                <i class="sep"></i>
                <button class="more"><svg><use href="#i-arrow"/></svg></button>
                <button class="more"><svg><use href="#d-pick"/></svg></button>
                <i class="sep"></i>
                <button class="more"><svg><use href="#d-point"/></svg></button>
                <button class="more"><svg><use href="#i-line"/></svg></button>
                <button><svg><use href="#d-plane"/></svg></button>
                <i class="sep wide"></i>
                <button class="more"><svg><use href="#d-sweep"/></svg></button>
                <button><svg><use href="#d-net"/></svg></button>
                <button class="more"><svg><use href="#d-loft"/></svg></button>
                <i class="sep wide"></i>
                <button class="more"><svg><use href="#d-arc"/></svg></button>
                <button class="more"><svg><use href="#d-spiral"/></svg></button>
                <i class="sep"></i>
                <button><svg><use href="#d-law"/></svg></button>
                <i class="sep"></i>
                <div class="tight">
                    <button><svg><use href="#d-bound"/></svg></button>
                    <button><svg><use href="#d-cross"/></svg></button>
                    <button class="more"><svg><use href="#d-hole"/></svg></button>
                    <button><svg><use href="#d-fold"/></svg></button>
                    <button><svg><use href="#d-tri"/></svg></button>
                </div>
            </div>
        </aside>
    </div>
</body>
</html>
```
FILE: styles.css
```css
* {
    box-sizing: border-box;
}

body {
    margin: 0;
    font-family: "Liberation Sans", Arial, sans-serif;
    font-size: 11px;
    color: #111;
    background-color: #333366;
}

h1, h2, ul, fieldset {
    margin: 0;
    padding: 0;
}

button {
    font: inherit;
    color: inherit;
    padding: 0;
    border: none;
    background: none;
}

.sprites {
    position: absolute;
    width: 0;
    height: 0;
}

.app {
    display: flex;
    height: 100vh;
    overflow: hidden;
}

.viewport {
    flex: 1;
    position: relative;
    background-color: #333366;
    border-top: 1px solid #686878;
}

/* Specification tree */
.tree {
    list-style: none;
    position: relative;
    display: grid;
    grid-auto-rows: 1fr;
    width: 180px;
    height: 178px;
    font-size: 13px;
    color: #f2f2f8;
}

.tree::before {
    content: "";
    position: absolute;
    left: 4px;
    top: 8px;
    bottom: 12px;
    width: 1px;
    background-color: #fff;
}

.tree li {
    position: relative;
    display: flex;
    align-items: center;
    gap: 3px;
    padding-left: 15px;
}

.tree li::before {
    content: "";
    position: absolute;
    left: 4px;
    top: 10px;
    width: 10px;
    height: 1px;
    background-color: #fff;
}

.tree li.root {
    padding-left: 0;
    gap: 2px;
}

.tree li.root::before {
    display: none;
}

.tree li.expandable::after {
    content: "+";
    position: absolute;
    left: 0;
    top: 6px;
    width: 9px;
    height: 9px;
    border-radius: 5px;
    background-color: #111;
    box-shadow: 0 0 0 1px #777;
    color: #fff;
    font-size: 10px;
    line-height: 9px;
    text-align: center;
}

.tree svg {
    width: 18px;
    height: 18px;
}

.tree .active span {
    background-color: #ff00ff;
    text-decoration: underline;
    line-height: 14px;
}

.model {
    position: absolute;
    left: 270px;
    top: 149px;
    width: 310px;
    height: 360px;
}

.model-labels {
    font-size: 12px;
    fill: #c01c1c;
}

.compass {
    position: absolute;
    right: 24px;
    top: 58px;
    width: 80px;
    height: 45px;
}

.axes {
    position: absolute;
    right: 1px;
    bottom: 5px;
    width: 28px;
    height: 24px;
}

/* Floating toolbars */
.toolbar {
    position: absolute;
    height: 48px;
    display: flex;
    flex-direction: column;
    padding: 2px 4px 4px;
    border: 1px solid #4a5cb4;
    background: linear-gradient(#8ba6ee, #5f76d0 18px, #6378cc);
}

.toolbar header {
    display: flex;
    align-items: center;
    justify-content: space-between;
    height: 16px;
    margin-left: -2px;
}

.toolbar h2 {
    font-size: 11px;
    color: #d9eefc;
    white-space: nowrap;
}

.close {
    position: relative;
    width: 11px;
    height: 11px;
    border: 1px solid #f0d5dc;
    background-color: #a85e79;
}

.close::before, .close::after,
.quit::before, .quit::after {
    content: "";
    position: absolute;
    left: 50%;
    top: 50%;
    width: 8px;
    height: 2px;
    background-color: #fff;
    transform: translate(-50%, -50%) rotate(45deg);
}

.close::after, .quit::after {
    transform: translate(-50%, -50%) rotate(-45deg);
}

.tools {
    flex: 1;
    display: flex;
    align-items: center;
    background: linear-gradient(#fafafd, #d2d0e4 60%, #aaa9c4);
    margin: 0 -1px;
}

.tools::before {
    content: "";
    width: 2px;
    height: 13px;
    margin: 0 3px 7px 5px;
    background-color: #fff;
    border-right: 1px solid #b8b8c8;
}

.tools button {
    flex: 1;
    display: flex;
    justify-content: center;
}

.tools svg {
    width: 18px;
    height: 18px;
}

.divider {
    width: 2px;
    align-self: stretch;
    background-color: #fff;
    margin: 0 2px;
}

.select { left: 420px; top: 54px; width: 176px; }
.extrude { right: 2px; top: 98px; width: 108px; }
.line-axis { right: 4px; top: 150px; width: 86px; }
.healing { right: 3px; top: 199px; width: 131px; }
.fillets { right: 5px; bottom: 70px; width: 130px; }
.patterns { right: 45px; bottom: 19px; width: 87px; }
.visual { left: 164px; bottom: 2px; width: 160px; }
.quick { left: 330px; bottom: 2px; width: 198px; }

/* Dialog */
.dialog {
    position: absolute;
    right: -1px;
    top: 226px;
    width: 267px;
    border: 3px solid #0a3cc8;
    border-top: none;
    border-radius: 6px 6px 0 0;
    background-color: #0a3cc8;
}

.dialog-title {
    display: flex;
    align-items: center;
    gap: 2px;
    height: 24px;
    margin: 0 -3px;
    padding: 0 3px 0 7px;
    border-radius: 6px 6px 0 0;
    background: linear-gradient(#2f80fa, #0a50e0 25%, #0c5cf0 80%, #0a3cc8);
}

.dialog-title h1 {
    flex: 1;
    font-size: 12px;
    color: #fff;
    white-space: nowrap;
}

.help, .quit {
    position: relative;
    width: 17px;
    height: 17px;
    border: 1px solid #fff;
    border-radius: 3px;
    background-color: #3a74ea;
    color: #fff;
    font-size: 14px;
    font-weight: bold;
    line-height: 15px;
}

.quit {
    background-color: #dd5030;
}

.quit::before, .quit::after {
    width: 13px;
}

.dialog-body {
    padding: 7px 8px 7px;
    background: radial-gradient(circle at 14px calc(100% - 10px), #fbb04a 0, #fcc677 16px, transparent 30px), #fce7c6;
    position: relative;
}

/* planet in the corner */
.dialog-body::before {
    content: "";
    position: absolute;
    left: 0;
    bottom: 0;
    width: 33px;
    height: 16px;
    border-radius: 0 33px 0 0;
    background: radial-gradient(circle at 10px 6px, #b8cfe0, #56799a 12px, #20344c 28px);
}

.list {
    background-color: #fff;
    border: 1px solid #8a8778;
    border-right-color: #fff;
    border-bottom-color: #fff;
    overflow: hidden;
}

.sections {
    height: 45px;
    margin-right: 1px;
}

.guides {
    height: 59px;
}

.list table {
    width: 100%;
    table-layout: fixed;
    border-collapse: separate;
    border-spacing: 0;
}

.list th {
    height: 12px;
    padding: 0 0 0 4px;
    font-weight: normal;
    line-height: 11px;
    text-align: left;
    white-space: nowrap;
    background-color: #ebe8d8;
    border-right: 1px solid #77746a;
    border-bottom: 1px solid #a5a294;
}

.list th:last-child {
    border-right: none;
}

.list td {
    height: 11px;
    padding: 0 0 0 4px;
    line-height: 11px;
    white-space: nowrap;
}

.c-no { width: 23px; }
.c-section { width: 82px; }
.c-guide { width: 122px; }
.c-tangent { width: 47px; }
.c-closing { width: 70px; }

.picked td {
    background-color: #316ac5;
    color: #fff;
}

.picked td:last-child {
    background-color: #fff;
}

.tabs {
    display: flex;
    align-items: stretch;
    height: 18px;
    margin: 4px 1px 0 2px;
}

.tab {
    width: 42px;
    border-right: 1px solid #333;
    margin: 2px 0 3px;
    line-height: 13px;
    white-space: nowrap;
}

.tab:nth-child(3) {
    width: 58px;
}

.tab.current {
    width: 53px;
    margin: 0;
    border-left: 1px solid #fff;
    border-top: 1px solid #fff;
}

.tab.last {
    flex: 1;
    width: auto;
    border-right: none;
    padding-left: 7px;
    margin-right: 4px;
    overflow: hidden;
    text-align: left;
}

.scroll {
    display: flex;
    align-items: center;
    justify-content: center;
    width: 13px;
    height: 13px;
    align-self: flex-end;
    background-color: #ebe8da;
    border: 1px solid;
    border-color: #fff #777 #777 #fff;
}

.scroll::before {
    content: "";
    border: 3px solid transparent;
    border-left: 4px solid #000;
    border-right: none;
}

.scroll.off::before {
    border-right: 4px solid #999;
    border-left: none;
}

.panel {
    margin: 0 1px 0 2px;
    padding: 3px 6px 6px 5px;
    border: 1px solid #fff;
    border-right-color: #222;
    border-bottom: 2px solid #222;
}

.edit-row {
    display: flex;
    gap: 1px;
    margin: 6px 1px 0 2px;
}

.edit-row button {
    width: 86px;
    height: 14px;
    line-height: 12px;
    background-color: #c9c7dc;
    border: 1px solid;
    border-color: #efeefa #77758c #77758c #efeefa;
    color: #aaa8b4;
    text-shadow: 1px 1px #fff;
}

.edit-row button:last-child {
    flex: 1;
}

fieldset {
    border: 1px solid #a9a28f;
    margin-right: -1px;
    padding: 2px 19px 1px 1px;
    box-shadow: inset 1px 1px #fff8e8;
    min-width: 0;
}

legend {
    margin-left: 4px;
    padding: 0 3px;
    line-height: 14px;
}

.param {
    display: flex;
    align-items: center;
    height: 22px;
}

.param input[type="checkbox"] {
    appearance: none;
    width: 10px;
    height: 10px;
    margin: 0 4px 0 0;
    background-color: #fffde8;
    border: 1px solid #444;
}

.spin {
    display: flex;
    width: 98px;
    height: 15px;
    margin-left: auto;
    border: 1px solid #88857a;
    border-right-color: #fff;
    border-bottom-color: #fff;
    background-color: #ebe8d6;
}

.spin input {
    flex: 1;
    min-width: 0;
    padding: 0;
    border: none;
    background: none;
    font: inherit;
    color: #aaa797;
}

.steps {
    display: flex;
    flex-direction: column;
    width: 12px;
}

.steps button {
    flex: 1;
    border: 1px solid #333;
    background: linear-gradient(#333, #333) center / 4px 1px no-repeat #eee;
}

.actions {
    display: flex;
    justify-content: flex-end;
    gap: 4px;
    margin: 6px -2px 0 0;
}

.actions button {
    display: flex;
    align-items: center;
    width: 61px;
    height: 17px;
    padding: 0 4px;
    background-color: #cfcde4;
    border: 2px solid;
    border-color: #f5f4fc #77758c #77758c #f5f4fc;
}

.actions span {
    flex: 1;
    text-align: center;
}

.actions .default {
    border-color: #222;
    box-shadow: inset 1px 1px #fff;
}

.lamp {
    width: 9px;
    height: 9px;
    border-radius: 50%;
}

.green {
    background: radial-gradient(circle at 3px 3px, #b6f0a6, #1c9a28 4px, #0c5c18);
}

.red {
    background: radial-gradient(circle at 3px 3px, #ffc0b0, #d8281c 4px, #8a1410);
}

/* Right dock */
.dock {
    display: flex;
    width: 60px;
    padding-left: 6px;
    background: linear-gradient(90deg, #fff 4px, #dcdaf0 5px, #cfcde6 10px, #cfcde6 56px, #b9b7d2);
}

.dock-col {
    width: 32px;
    flex: none;
}

.dock-col.second {
    width: 22px;
}

.dock button {
    position: relative;
    display: flex;
    align-items: center;
    width: 22px;
    height: 24px;
}

.dock svg {
    width: 18px;
    height: 18px;
}

.dock text {
    font-size: 9px;
    fill: #1a2680;
}

.more::after {
    content: "";
    position: absolute;
    left: 16px;
    bottom: 1px;
    border: 3px solid transparent;
    border-top: 3px solid #000;
    border-bottom: none;
}

.second .more::after {
    left: 16px;
}

.sep {
    display: block;
    height: 11px;
    padding: 4px 0;
}

.sep::before {
    content: "";
    display: block;
    width: 14px;
    height: 2px;
    background-color: #fff;
    border-bottom: 1px solid #b0aec8;
}

.spaced {
    margin-top: 7px;
}

.second .sep {
    height: 14px;
    padding: 6px 0;
}

.second .sep:first-child {
    height: 11px;
    padding: 4px 0;
}

.second .sep.wide {
    height: 5px;
    padding: 2px 0;
}

.second .wide::before {
    width: 22px;
}

.tight button {
    height: 23px;
}
```
